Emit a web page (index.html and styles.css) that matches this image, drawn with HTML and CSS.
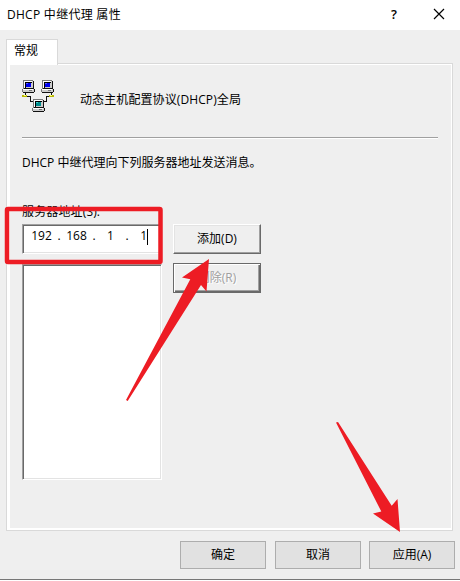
FILE: index.html
```html
<!DOCTYPE html>
<html lang="zh-CN">
<head>
<meta charset="utf-8">
<title>DHCP 中继代理 属性</title>
<link rel="stylesheet" href="styles.css">
</head>
<body>
<div class="dialog">
  <header class="titlebar">
    <span class="title">DHCP 中继代理 属性</span>
    <span class="help">?</span>
    <svg class="close" width="12" height="12" viewBox="0 0 12 12"><path d="M1 1l10 10M11 1L1 11"/></svg>
  </header>
  <div class="tab">常规</div>
  <main class="panel">
    <div class="heading">
      <svg class="network" width="34" height="34" viewBox="0 0 34 34" shape-rendering="crispEdges">
        <defs>
          <g id="case">
            <path fill="#777" d="M1 0h10v9H1zM0 9h12v3H0z"/>
            <path fill="#111" d="M11 1h1v8h-1zM12 9h1v3h-1zM1 12h11v1H1zM2 8h9v1H2z"/>
            <path fill="#ccc" d="M2 1h9v7H2zM1 9h11v3H1z"/>
            <path fill="#fff" d="M2 1h8v1H2zM2 1h1v7H2zM1 9h10v1H1z"/>
            <path fill="#000" d="M3 2h7v1H4v5H3z"/>
            <path fill="#777" d="M7 10h3v1H7z"/>
          </g>
        </defs>
        <path fill="none" stroke="#111" d="M3.500 13v2M5 16.500h3.500v5H12M29.500 13v2M28 16.500h-3.500v5H22"/>
        <path fill="#b8b800" d="M0 15h5v2H0zM27 15h5v2h-5z"/>
        <path fill="#ffff80" d="M2 15h2v1H2zM28 15h2v1h-2z"/>
        <use href="#case"/><path fill="#00e" d="M4 3h5v4H4z"/><path fill="#55f" d="M4 3h2v1H4z"/>
        <use href="#case" x="19"/><path fill="#00e" d="M23 3h5v4h-5z"/><path fill="#55f" d="M23 3h2v1h-2z"/>
        <use href="#case" x="10" y="19"/><path fill="#008c8c" d="M14 22h5v4h-5z"/><path fill="#4cc" d="M14 22h2v1h-2z"/>
      </svg>
      <span>动态主机配置协议(DHCP)全局</span>
    </div>
    <div class="rule"></div>
    <p class="intro">DHCP 中继代理向下列服务器地址发送消息。</p>
    <div class="label">服务器地址(S):</div>
    <div class="editor">
      <div class="fields">
        <div class="address sunken"><span>192</span><i>.</i><span>168</span><i>.</i><span>1</span><i>.</i><span class="last">1</span><b class="caret"></b></div>
        <div class="list sunken"></div>
      </div>
      <div class="actions">
        <div class="raised">添加(D)</div>
        <div class="raised disabled">删除(R)</div>
      </div>
    </div>
  </main>
  <footer class="footer">
    <div class="button">确定</div>
    <div class="button">取消</div>
    <div class="button apply">应用(A)</div>
  </footer>
  <svg class="marks" width="460" height="581" viewBox="0 0 460 581">
    <rect x="7" y="209" width="153.500" height="53" rx="1"/>
    <path d="M209 259L182 277.500L190.300 279.300L126 400L127.700 401L201 285L206.500 291.500Z"/>
    <path d="M336 422.500L338 422L391.700 505.700L397.500 499L400 532L373 513.500L381.300 511.500Z"/>
  </svg>
</div>
</body>
</html>
```
FILE: styles.css
```css
* { box-sizing: border-box; }
body {
  margin: 0;
  font: 12px/18px "Open Sans", "Noto Sans CJK SC", sans-serif;
  color: #000;
  background: #fff;
}
.dialog {
  position: relative;
  width: 460px;
  height: 580px;
  background: #efefef;
  border-bottom: 1px solid #777;
}
.titlebar {
  display: flex;
  align-items: center;
  height: 30px;
  padding: 0 15px 2px 7px;
  background: #fff;
}
.title { flex: 1; white-space: nowrap; letter-spacing: .28px; padding-top: 2px; }
.help { font-size: 13px; font-weight: 600; margin-right: 36px; }
.close { fill: none; stroke: #000; stroke-width: 1.2; }
.tab {
  position: relative;
  width: 52px;
  height: 26px;
  margin: 9px 0 -2px 6px;
  padding: 2px 0 0 7px;
  background: #fff;
  border: 1px solid #d9d9d9;
  border-bottom: 0;
}
.panel {
  width: 447px;
  height: 468px;
  margin-left: 6px;
  padding: 14px 13px 0 12px;
  border: 1px solid #d9d9d9;
  box-shadow: inset 3px 0 #fff, inset -1px 0 #fff, inset 0 1px #fff, inset 0 -2px #fff;
}
.heading { display: flex; height: 59px; padding-left: 3px; }
.heading span { margin: 13px 0 0 24px; letter-spacing: .1px; }
.network { margin-top: 2px; flex: none; }
.rule { width: 416px; margin-left: 3px; height: 2px; border-top: 1px solid #a0a0a0; border-bottom: 1px solid #fff; }
.intro { margin: 15px 0 0 3px; }
.label { margin: 31px 0 0 3px; height: 21px; letter-spacing: .15px; }
.editor { display: flex; margin-left: 3px; }
.fields { width: 140px; }
.sunken {
  background: #fff;
  border: 1px solid;
  border-color: #a0a0a0 #fff #fff #a0a0a0;
  box-shadow: inset 1px 1px #696969, inset -1px -1px #e3e3e3;
}
.address {
  display: flex;
  width: 140px;
  height: 30px;
  padding: 2px 0 0 8px;
  margin-bottom: 10px;
}
.address span { width: 21px; text-align: center; }
.address i { width: 14px; text-align: center; font-style: normal; }
.address span:nth-of-type(3) { width: 19px; }
.address .last { width: 13px; text-align: right; }
.caret { width: 1px; height: 16px; margin-top: 2px; background: #000; }
.list { height: 216px; }
.actions { display: grid; gap: 9px; align-content: start; margin-left: 11px; }
.raised {
  width: 88px;
  height: 30px;
  padding-top: 5px;
  text-align: center;
  border: 1px solid;
  border-color: #fff #696969 #696969 #fff;
  box-shadow: inset -1px -1px #a0a0a0, inset 1px 1px #e3e3e3;
}
.disabled {
  color: #a0a0a0;
  text-shadow: 1px 1px #fff;
  border-color: #696969;
  box-shadow: inset 1px 1px #fff, inset -1px -1px #696969, inset -2px -2px #a0a0a0;
}
.footer { display: flex; gap: 9px; margin: 10px 0 0 180px; }
.button {
  width: 86px;
  height: 28px;
  padding-top: 4px;
  text-align: center;
  background: #e1e1e1;
  border: 1px solid #adadad;
}
.apply { margin-left: -1px; }
.marks { position: absolute; left: 0; top: 0; }
.marks rect { fill: none; stroke: #ed1c24; stroke-width: 4.5; }
.marks path { fill: #ed1c24; }
```
